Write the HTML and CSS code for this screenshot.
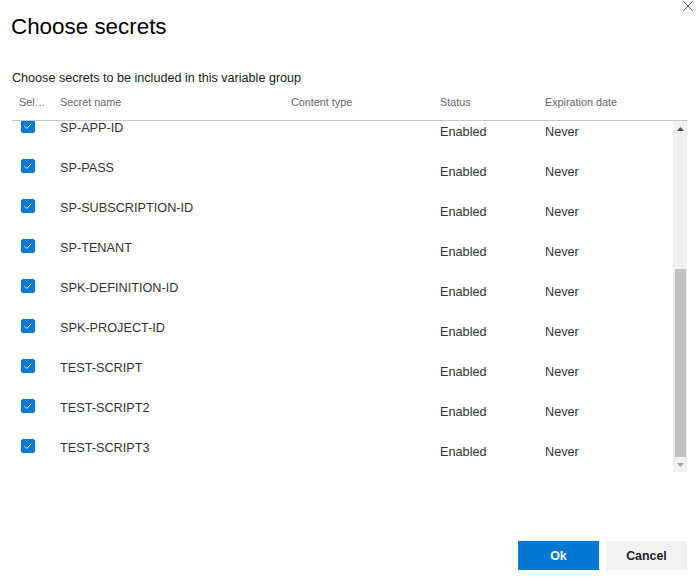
FILE: index.html
```html
<!DOCTYPE html>
<html lang="en">
<head>
<meta charset="utf-8">
<title>Choose secrets</title>
<link rel="stylesheet" href="styles.css">
</head>
<body>
<div class="dialog">
  <button class="close" aria-label="Close">
    <svg width="10" height="10" viewBox="0 0 10 10"><path d="M0.5 0.5 L9.5 9.5 M9.5 0.5 L0.5 9.5" stroke="#5f5f5f" stroke-width="1" fill="none"/></svg>
  </button>
  <h1 class="title">Choose secrets</h1>
  <p class="subtitle">Choose secrets to be included in this variable group</p>
  <div class="table">
    <div class="thead">
      <div class="th">Select</div>
      <div class="th">Secret name</div>
      <div class="th">Content type</div>
      <div class="th">Status</div>
      <div class="th">Expiration date</div>
    </div>
    <div class="tbody">
      <div class="viewport">
        <div class="rows">
          <div class="row"><div class="c-check"><span class="cb"><svg width="14" height="14" viewBox="0 0 14 14"><path d="M3.5 7.2 L5.8 9.5 L10.5 4.5" stroke="#fff" stroke-width="1" fill="none"/></svg></span></div><div class="c-name">SP-APP-ID</div><div class="c-type"></div><div class="c-status">Enabled</div><div class="c-status">Never</div></div>
          <div class="row"><div class="c-check"><span class="cb"><svg width="14" height="14" viewBox="0 0 14 14"><path d="M3.5 7.2 L5.8 9.5 L10.5 4.5" stroke="#fff" stroke-width="1" fill="none"/></svg></span></div><div class="c-name">SP-PASS</div><div class="c-type"></div><div class="c-status">Enabled</div><div class="c-status">Never</div></div>
          <div class="row"><div class="c-check"><span class="cb"><svg width="14" height="14" viewBox="0 0 14 14"><path d="M3.5 7.2 L5.8 9.5 L10.5 4.5" stroke="#fff" stroke-width="1" fill="none"/></svg></span></div><div class="c-name">SP-SUBSCRIPTION-ID</div><div class="c-type"></div><div class="c-status">Enabled</div><div class="c-status">Never</div></div>
          <div class="row"><div class="c-check"><span class="cb"><svg width="14" height="14" viewBox="0 0 14 14"><path d="M3.5 7.2 L5.8 9.5 L10.5 4.5" stroke="#fff" stroke-width="1" fill="none"/></svg></span></div><div class="c-name">SP-TENANT</div><div class="c-type"></div><div class="c-status">Enabled</div><div class="c-status">Never</div></div>
          <div class="row"><div class="c-check"><span class="cb"><svg width="14" height="14" viewBox="0 0 14 14"><path d="M3.5 7.2 L5.8 9.5 L10.5 4.5" stroke="#fff" stroke-width="1" fill="none"/></svg></span></div><div class="c-name">SPK-DEFINITION-ID</div><div class="c-type"></div><div class="c-status">Enabled</div><div class="c-status">Never</div></div>
          <div class="row"><div class="c-check"><span class="cb"><svg width="14" height="14" viewBox="0 0 14 14"><path d="M3.5 7.2 L5.8 9.5 L10.5 4.5" stroke="#fff" stroke-width="1" fill="none"/></svg></span></div><div class="c-name">SPK-PROJECT-ID</div><div class="c-type"></div><div class="c-status">Enabled</div><div class="c-status">Never</div></div>
          <div class="row"><div class="c-check"><span class="cb"><svg width="14" height="14" viewBox="0 0 14 14"><path d="M3.5 7.2 L5.8 9.5 L10.5 4.5" stroke="#fff" stroke-width="1" fill="none"/></svg></span></div><div class="c-name">TEST-SCRIPT</div><div class="c-type"></div><div class="c-status">Enabled</div><div class="c-status">Never</div></div>
          <div class="row"><div class="c-check"><span class="cb"><svg width="14" height="14" viewBox="0 0 14 14"><path d="M3.5 7.2 L5.8 9.5 L10.5 4.5" stroke="#fff" stroke-width="1" fill="none"/></svg></span></div><div class="c-name">TEST-SCRIPT2</div><div class="c-type"></div><div class="c-status">Enabled</div><div class="c-status">Never</div></div>
          <div class="row"><div class="c-check"><span class="cb"><svg width="14" height="14" viewBox="0 0 14 14"><path d="M3.5 7.2 L5.8 9.5 L10.5 4.5" stroke="#fff" stroke-width="1" fill="none"/></svg></span></div><div class="c-name">TEST-SCRIPT3</div><div class="c-type"></div><div class="c-status">Enabled</div><div class="c-status">Never</div></div>
        </div>
      </div>
      <div class="scrollbar">
        <div class="sb-btn"><svg width="7" height="4" viewBox="0 0 7 4"><polygon points="0,4 7,4 3.5,0" fill="#505050"/></svg></div>
        <div class="sb-track"><div class="sb-thumb"></div></div>
        <div class="sb-btn"><svg width="7" height="4" viewBox="0 0 7 4"><polygon points="0,0 7,0 3.5,4" fill="#a3a3a3"/></svg></div>
      </div>
    </div>
  </div>
  <div class="footer">
    <button class="btn primary">Ok</button>
    <button class="btn">Cancel</button>
  </div>
</div>
</body>
</html>
```

FILE: styles.css
```css
* { box-sizing: border-box; }
html, body { margin: 0; padding: 0; background: #fff; }
body { font-family: "Liberation Sans", Arial, sans-serif; }

.dialog {
  position: relative;
  width: 700px;
  height: 588px;
  padding: 15px 13px 0 12px;
}

.close {
  position: absolute;
  top: 1px;
  right: 7px;
  width: 10px;
  height: 10px;
  padding: 0;
  border: 0;
  background: none;
  display: block;
}
.close svg { display: block; }

.title {
  margin: 0 0 0 -1px;
  font-size: 22.4px;
  font-weight: 400;
  line-height: 24px;
  color: #000;
}

.subtitle {
  margin: 32px 0 0;
  font-size: 12.6px;
  line-height: 15px;
  color: #1b1b1b;
}

.thead, .row {
  display: grid;
  grid-template-columns: 41px 231px 149px 105px 1fr;
}

.thead {
  margin-top: 10px;
  padding-bottom: 11px;
  border-bottom: 1px solid #c8c8c8;
  font-size: 10.8px;
  line-height: 13px;
  color: #666;
}
.th {
  padding: 0 7px;
  white-space: nowrap;
  overflow: hidden;
  text-overflow: ellipsis;
}

.tbody {
  display: flex;
  height: 351px;
}
.viewport {
  flex: 1;
  overflow: hidden;
}
.rows { margin-top: -9px; }

.row {
  height: 40px;
  align-items: start;
  font-size: 12.7px;
  line-height: 14px;
  color: #333;
}
.c-check { padding: 7px 0 0 9px; }
.c-name { padding: 9px 7px 0; white-space: nowrap; }
.c-type { padding: 9px 7px 0; }
.c-status { padding: 13px 7px 0; white-space: nowrap; }

.cb {
  display: block;
  width: 14px;
  height: 14px;
  border-radius: 2px;
  background: #0078d4;
}
.cb svg { display: block; }

.scrollbar {
  width: 14px;
  background: #f1f1f1;
  display: flex;
  flex-direction: column;
}
.sb-btn {
  height: 15px;
  display: flex;
  align-items: center;
  justify-content: center;
}
.sb-btn svg { display: block; }
.sb-track {
  flex: 1;
  display: flex;
  flex-direction: column;
  justify-content: flex-end;
  padding: 0 1px 0 2px;
}
.sb-thumb {
  height: 188px;
  background: #c1c1c1;
}

.footer {
  display: flex;
  justify-content: flex-end;
  gap: 7px;
  margin-top: 69px;
}
.btn {
  width: 81px;
  height: 29px;
  border: 0;
  padding: 0;
  font-family: "Liberation Sans", Arial, sans-serif;
  font-size: 12.4px;
  font-weight: 700;
  background: #f3f2f1;
  color: #201f1e;
}
.btn.primary {
  background: #0078d4;
  color: #fff;
}
```
